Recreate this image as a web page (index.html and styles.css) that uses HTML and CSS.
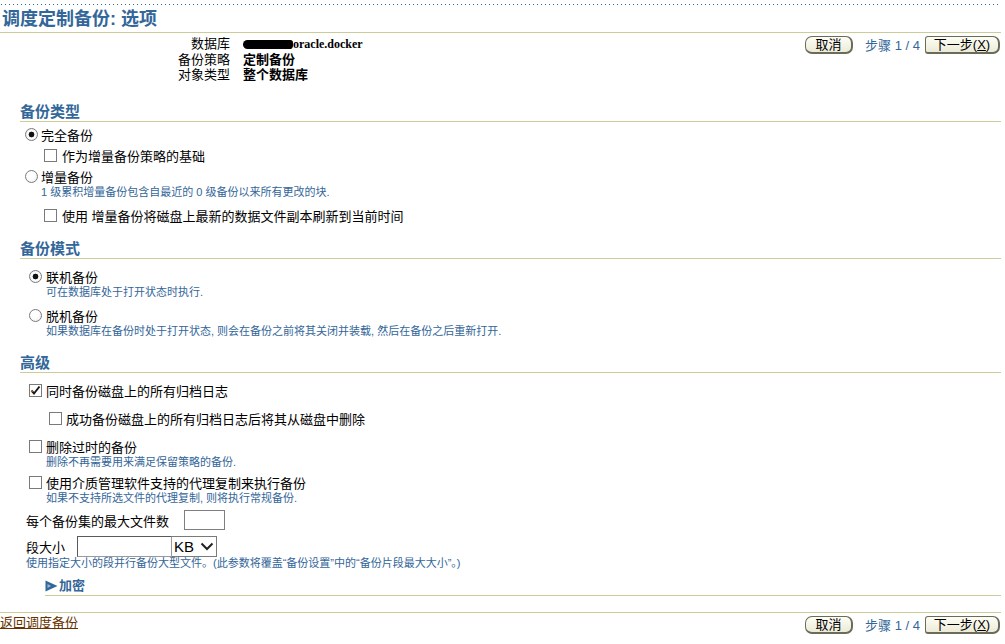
FILE: index.html
```html
<!DOCTYPE html>
<html lang="zh-CN">
<head>
    <meta charset="UTF-8">
    <title>调度定制备份: 选项</title>
    <link rel="stylesheet" href="styles.css">
</head>
<body>
<div class="page">
    <div class="dots"></div>
    <h1 class="title">调度定制备份: 选项</h1>

    <div class="header">
        <div class="info">
            <span class="label">数据库</span>
            <span class="value"><span class="blot"></span><span class="host">oracle.docker</span></span>
            <span class="label">备份策略</span>
            <span class="value">定制备份</span>
            <span class="label">对象类型</span>
            <span class="value">整个数据库</span>
        </div>
        <div class="nav">
            <button class="btn cancel">取消</button>
            <span class="step">步骤 1 / 4</span>
            <button class="btn next">下一步(<u>X</u>)</button>
        </div>
    </div>

    <h2 class="section">备份类型</h2>
    <div class="list type">
        <label class="opt"><span class="radio on"></span>完全备份</label>
        <label class="opt sub"><span class="check"></span>作为增量备份策略的基础</label>
        <label class="opt"><span class="radio"></span>增量备份</label>
        <div class="help">1 级累积增量备份包含自最近的 0 级备份以来所有更改的块.</div>
        <label class="opt sub"><span class="check"></span>使用 增量备份将磁盘上最新的数据文件副本刷新到当前时间</label>
    </div>

    <h2 class="section">备份模式</h2>
    <div class="list mode">
        <label class="opt"><span class="radio on"></span>联机备份</label>
        <div class="help">可在数据库处于打开状态时执行.</div>
        <label class="opt"><span class="radio"></span>脱机备份</label>
        <div class="help">如果数据库在备份时处于打开状态, 则会在备份之前将其关闭并装载, 然后在备份之后重新打开.</div>
    </div>

    <h2 class="section">高级</h2>
    <div class="list adv">
        <label class="opt"><span class="check on"><svg width="11" height="11" viewBox="0 0 11 11"><path d="M1.5 5.5 L4 8.5 L9.5 1.5" fill="none" stroke="#1a1a1a" stroke-width="2"/><path d="M1.5 5.5 L2.5 6.7" stroke="#c87820" stroke-width="1.5"/></svg></span>同时备份磁盘上的所有归档日志</label>
        <label class="opt sub"><span class="check"></span>成功备份磁盘上的所有归档日志后将其从磁盘中删除</label>
        <label class="opt"><span class="check"></span>删除过时的备份</label>
        <div class="help">删除不再需要用来满足保留策略的备份.</div>
        <label class="opt"><span class="check"></span>使用介质管理软件支持的代理复制来执行备份</label>
        <div class="help">如果不支持所选文件的代理复制, 则将执行常规备份.</div>

        <div class="field count">
            <span>每个备份集的最大文件数</span>
            <input class="text short" type="text">
        </div>
        <div class="field size">
            <span>段大小</span>
            <input class="text long" type="text">
            <span class="select">KB<svg width="14" height="9" viewBox="0 0 14 9"><path d="M1.5 1.5 L7 7 L12.5 1.5" fill="none" stroke="#222" stroke-width="2"/></svg></span>
        </div>
        <div class="help note">使用指定大小的段并行备份大型文件。(此参数将覆盖“备份设置”中的“备份片段最大大小”。)</div>

        <h3 class="toggle"><svg width="13" height="12" viewBox="0 0 13 12"><polygon points="0.5,0.5 12.5,6 0.5,11.5" fill="#336699"/><polygon points="2.5,4 6,6 2.5,8" fill="#9ab8d8"/></svg>加密</h3>
    </div>

    <div class="footer">
        <a class="back" href="#">返回调度备份</a>
        <div class="nav">
            <button class="btn cancel">取消</button>
            <span class="step">步骤 1 / 4</span>
            <button class="btn next">下一步(<u>X</u>)</button>
        </div>
    </div>
</div>
</body>
</html>
```

FILE: styles.css
```css
body {
    margin: 0;
    font-family: "Liberation Sans", "Noto Sans CJK SC", sans-serif;
    font-size: 13px;
    color: #000;
    background: #fff;
}
.page {
    width: 1001px;
}
.dots {
    height: 8px;
    background: linear-gradient(to right, #336699 1px, transparent 1px) 1px 4px / 4px 1px repeat-x;
}
.title {
    margin: 0;
    padding: 0 0 2px 2px;
    font-size: 18px;
    line-height: 22px;
    color: #336699;
    border-bottom: 1px solid #cccc99;
}

/* page header: summary + train buttons */
.header {
    display: flex;
    justify-content: space-between;
    height: 54px;
}
.info {
    display: grid;
    grid-template-columns: 230px auto;
    column-gap: 13px;
    align-content: start;
    padding-top: 3px;
    line-height: 15px;
}
.info .label {
    text-align: right;
}
.info .value {
    font-weight: bold;
    white-space: nowrap;
}
.blot {
    display: inline-block;
    width: 50px;
    height: 9px;
    border-radius: 5px 3px 4px 5px;
    background: #000;
    vertical-align: -1px;
}
.host {
    font-family: "Liberation Serif", serif;
    font-size: 12px;
}
.nav {
    display: flex;
    align-items: center;
    align-self: flex-start;
    padding: 2px 1px 0 0;
}
.btn {
    height: 18px;
    padding: 0;
    font-family: inherit;
    font-size: 13px;
    line-height: 15px;
    color: #000;
    background: linear-gradient(#fdfdf6, #ecebd8);
    border: 1px solid #6b6b5a;
    border-bottom-width: 2px;
    border-right-width: 2px;
    border-radius: 7px;
}
.btn.cancel {
    width: 48px;
}
.btn.next {
    width: 75px;
    border-radius: 3px 7px 7px 3px;
}
.step {
    margin: 0 5px 0 12px;
    color: #336699;
}

/* sections */
.section {
    margin: 16px 0 0 20px;
    font-size: 15px;
    line-height: 18px;
    color: #336699;
    border-bottom: 1px solid #cccc99;
}
.opt {
    display: flex;
    align-items: center;
    height: 18px;
    margin-top: 3px;
    white-space: nowrap;
}
.help {
    font-size: 11px;
    line-height: 14px;
    color: #336699;
    white-space: nowrap;
}
.help + .opt {
    margin-top: 7px;
}
.radio {
    width: 13px;
    height: 13px;
    margin-right: 3px;
    box-sizing: border-box;
    border: 1px solid #7a7a7a;
    border-radius: 50%;
    background: radial-gradient(circle at 40% 40%, #fff 40%, #e4e4e4 100%);
}
.radio.on {
    background: radial-gradient(circle, #111 0, #111 2.6px, #fff 3.2px, #e8e8e8 100%);
}
.check {
    display: flex;
    align-items: center;
    justify-content: center;
    width: 13px;
    height: 13px;
    margin-right: 4px;
    box-sizing: border-box;
    border: 1px solid #7a7a7a;
    background: #fff;
}

.type .opt {
    padding-left: 25px;
}
.type .sub {
    padding-left: 44px;
}
.type .sub .check {
    margin-right: 5px;
}
.type .help {
    padding-left: 41px;
}

.mode {
    padding-top: 5px;
}
.mode .opt,
.adv .opt {
    padding-left: 29px;
}
.mode .radio {
    margin-right: 4px;
}
.mode .help,
.adv .help {
    padding-left: 46px;
}

.adv {
    margin-top: -2px;
}
.adv .opt {
    margin-top: 10px;
}
.adv .sub {
    padding-left: 49px;
}
.adv .help + .opt {
    margin-top: 4px;
}

.field {
    display: flex;
    align-items: center;
    padding-left: 26px;
    margin-top: 5px;
}
.field.size {
    margin-top: 6px;
}
.text {
    box-sizing: border-box;
    margin: 0;
    border: 1px solid #7f7f7f;
    background: #fff;
}
.short {
    width: 41px;
    height: 20px;
    margin-left: 15px;
}
.long {
    width: 95px;
    height: 21px;
    margin-left: 12px;
    border-color: #5a5a5a #9a9a9a #9a9a9a #5a5a5a;
}
.select {
    display: flex;
    align-items: center;
    justify-content: space-between;
    box-sizing: border-box;
    width: 45px;
    height: 21px;
    padding: 0 2px 0 2px;
    font-size: 15px;
    border: 1px solid #7a7a7a;
    border-left: none;
    background: #fff;
}
.adv .note {
    padding-left: 26px;
    margin-top: -1px;
}
.toggle {
    display: flex;
    align-items: center;
    margin: 7px 0 0 45px;
    font-size: 13px;
    line-height: 18px;
    color: #336699;
    border-bottom: 1px solid #cccc99;
}
.toggle svg {
    margin-right: 1px;
}

/* bottom bar */
.footer {
    display: flex;
    justify-content: space-between;
    margin-top: 16px;
    border-top: 1px solid #cccc99;
}
.back {
    padding-top: 1px;
    line-height: 18px;
    color: #663300;
    text-decoration: underline;
}
```
